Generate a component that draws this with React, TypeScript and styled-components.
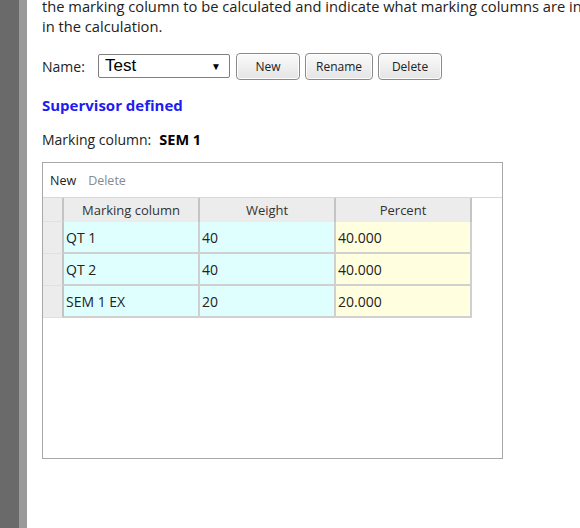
import React from 'react';
import styled, { createGlobalStyle } from 'styled-components';

const GlobalStyle = createGlobalStyle`
  html, body {
    margin: 0;
    padding: 0;
    background: #fff;
    overflow: hidden;
  }
  body {
    font-family: "Segoe UI", "Open Sans", "Noto Sans", sans-serif;
    color: #222;
  }
`;

type Row = { name: string; weight: string; percent: string };

const rows: Row[] = [
  { name: 'QT 1', weight: '40', percent: '40.000' },
  { name: 'QT 2', weight: '40', percent: '40.000' },
  { name: 'SEM 1 EX', weight: '20', percent: '20.000' },
];

const App = () => {
  return (
    <>
      <GlobalStyle />
      <Page>
        <SideDark />
        <SideLight />
        <Content>
          <Intro>
            <IntroLine>
              the marking column to be calculated and indicate what marking columns are included
            </IntroLine>
            <IntroLine>in the calculation.</IntroLine>
          </Intro>

          <NameRow>
            <Label>Name:</Label>
            <Select>
              <span>Test</span>
              <Arrow>▼</Arrow>
            </Select>
            <Button>New</Button>
            <Button>Rename</Button>
            <Button>Delete</Button>
          </NameRow>

          <SectionTitle>Supervisor defined</SectionTitle>

          <ColumnLine>
            Marking column:<strong>SEM 1</strong>
          </ColumnLine>

          <GridPanel>
            <Toolbar>
              <ToolItem>New</ToolItem>
              <ToolItem disabled>Delete</ToolItem>
            </Toolbar>
            <Grid>
              <HeaderRow>
                <RowHead />
                <HeadCell>Marking column</HeadCell>
                <HeadCell>Weight</HeadCell>
                <HeadCell>Percent</HeadCell>
              </HeaderRow>
              {rows.map((r) => (
                <DataRow key={r.name}>
                  <RowHead />
                  <Cell tone="cyan">{r.name}</Cell>
                  <Cell tone="cyan">{r.weight}</Cell>
                  <Cell tone="yellow">{r.percent}</Cell>
                </DataRow>
              ))}
            </Grid>
          </GridPanel>
        </Content>
      </Page>
    </>
  );
};

export default App;

const Page = styled.div`
  display: flex;
  width: 580px;
  height: 528px;
  overflow: hidden;
`;

const SideDark = styled.div`
  width: 19px;
  flex: none;
  background: #6a6a6a;
`;

const SideLight = styled.div`
  width: 8px;
  flex: none;
  background: #9a9a9a;
`;

const Content = styled.div`
  flex: 1;
  padding-left: 15px;
  min-width: 0;
  overflow: hidden;
`;

const Intro = styled.div`
  margin-top: -4px;
  font-size: 14.7px;
  line-height: 20px;
  color: #222;
`;

const IntroLine = styled.div`
  white-space: nowrap;
`;

const NameRow = styled.div`
  display: flex;
  align-items: center;
  margin-top: 16px;
  height: 28px;
`;

const Label = styled.span`
  font-size: 14px;
  width: 56px;
`;

const Select = styled.div`
  display: flex;
  align-items: center;
  justify-content: space-between;
  box-sizing: border-box;
  width: 132px;
  height: 24px;
  padding: 0 8px 0 6px;
  border: 1px solid #7f7f7f;
  border-radius: 2px;
  font-family: "Liberation Sans", Arial, sans-serif;
  font-size: 17px;
  color: #000;
  margin-right: 6px;
`;

const Arrow = styled.span`
  font-size: 10px;
`;

const Button = styled.button`
  box-sizing: border-box;
  height: 27px;
  min-width: 64px;
  padding: 0 10px;
  margin-right: 5px;
  border: 1px solid #8a8a8a;
  border-radius: 4px;
  background: linear-gradient(#fbfbfb, #e4e4e4);
  box-shadow: inset 0 0 0 1px #fff;
  font-family: "Segoe UI", "Open Sans", sans-serif;
  font-size: 12px;
  color: #222;
`;

const SectionTitle = styled.div`
  margin-top: 15px;
  font-size: 15px;
  font-weight: bold;
  color: #1d1df0;
`;

const ColumnLine = styled.div`
  margin-top: 15px;
  font-size: 14px;

  strong {
    margin-left: 8px;
    font-size: 14.5px;
    color: #000;
  }
`;

const GridPanel = styled.div`
  box-sizing: border-box;
  width: 461px;
  height: 297px;
  margin-top: 13px;
  border: 1px solid #a8a8a8;
  background: #fff;
`;

const Toolbar = styled.div`
  display: flex;
  align-items: center;
  gap: 12px;
  height: 34px;
  padding-left: 7px;
  border-bottom: 1px solid #d8d8d8;
`;

const ToolItem = styled.span<{ disabled?: boolean }>`
  font-size: 12.5px;
  color: ${(p) => (p.disabled ? '#8a8a8a' : '#222')};
`;

const Grid = styled.div`
  display: flex;
  flex-direction: column;
  width: 429px;
`;

const HeaderRow = styled.div`
  display: grid;
  grid-template-columns: 21px 136px 136px 136px;
  height: 24px;
  background: #ececec;
`;

const DataRow = styled.div`
  display: grid;
  grid-template-columns: 21px 136px 136px 136px;
  height: 32px;
`;

const RowHead = styled.div`
  background: #ececec;
  border-right: 2px solid #c4c4c4;
  border-bottom: 1px solid #e0e0e0;
`;

const HeadCell = styled.div`
  display: flex;
  align-items: center;
  justify-content: center;
  font-size: 13px;
  color: #333;
  border-right: 2px solid #c4c4c4;
`;

const Cell = styled.div<{ tone: 'cyan' | 'yellow' }>`
  display: flex;
  align-items: center;
  padding-left: 2px;
  font-size: 14px;
  color: #222;
  background: ${(p) => (p.tone === 'cyan' ? '#dfffff' : '#ffffe0')};
  border-right: 2px solid #d0d0d0;
  border-bottom: 2px solid #d0d0d0;
`;
